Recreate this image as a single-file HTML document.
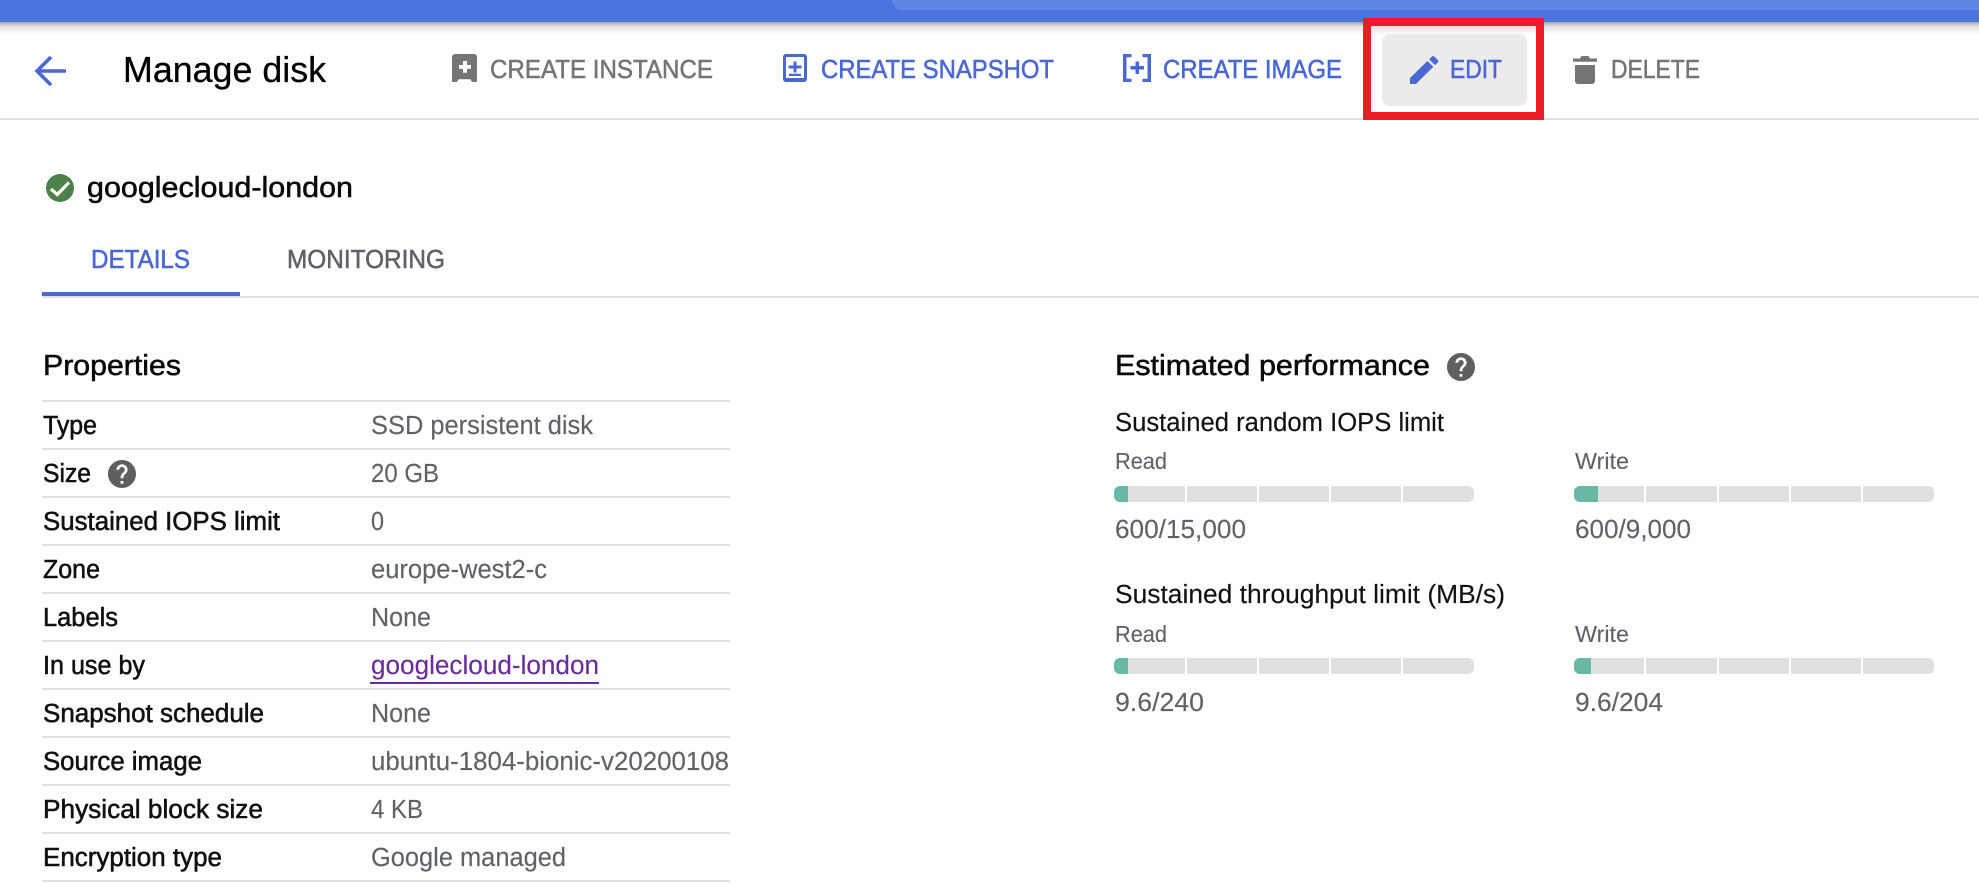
<!DOCTYPE html>
<html lang="en">
<head>
<meta charset="utf-8">
<title>Manage disk</title>
<style>
html,body{margin:0;padding:0;background:#fff;width:1979px;height:887px;overflow:hidden}
svg{display:block;position:absolute;left:0;top:0}
text{font-family:"Liberation Sans",Arial,sans-serif;white-space:pre}
.m{stroke-width:.55}
.btn{font-size:26px}
.lab{font-size:25.5px;fill:#111;stroke:#111}
.val{font-size:25.5px;fill:#5f6368;stroke:#5f6368;stroke-width:.15}
.h{font-size:29px;fill:#0a0a0a;stroke:#0a0a0a}
.sub{font-size:25.5px;fill:#111;stroke:#111;stroke-width:.15}
.sm{font-size:23px;fill:#5f6368;stroke:#5f6368;stroke-width:.12}
.num{font-size:25.5px;fill:#5f6368;stroke:#5f6368;stroke-width:.15}
</style>
</head>
<body>
<svg xmlns="http://www.w3.org/2000/svg" width="1979" height="887" viewBox="0 0 1979 887">
<defs>
<linearGradient id="sh" x1="0" y1="0" x2="0" y2="1">
<stop offset="0" stop-color="#a6a6a6"/>
<stop offset=".35" stop-color="#e2e2e2"/>
<stop offset="1" stop-color="#fff"/>
</linearGradient>
</defs>
<rect width="1979" height="887" fill="#fff"/>

<!-- top bar -->
<rect x="0" y="0" width="1979" height="22" fill="#4a74e0"/>
<path d="M892 0H1979V10H902a10 10 0 0 1-10-10z" fill="#5f86e6"/>
<rect x="0" y="22" width="1979" height="13" fill="url(#sh)"/>

<!-- toolbar -->
<rect x="0" y="118" width="1979" height="2" fill="#e0e0e0"/>
<path d="M66 71H38M51 57L37 71L51 85" fill="none" stroke="#4a67d6" stroke-width="3.600"/>
<text x="123" y="82" font-size="36" fill="#000" stroke="#000" stroke-width=".3" textLength="203" lengthAdjust="spacingAndGlyphs">Manage disk</text>

<path fill-rule="evenodd" fill="#757575" d="M456 54h18a3 3 0 0 1 3 3v24a1 1 0 0 1-1 1h-3a2 2 0 0 1-1.600-1l-1-1.700h-11.800l-1 1.700a2 2 0 0 1-1.600 1h-3a1 1 0 0 1-1-1V57a3 3 0 0 1 3-3zM463 61v4h-4v3.700h4v4h4v-4h4V65h-4v-4z"/>
<text class="btn m" x="490" y="78" fill="#757575" stroke="#757575" textLength="223" lengthAdjust="spacingAndGlyphs">CREATE INSTANCE</text>

<path fill-rule="evenodd" fill="#4a67d6" d="M786 54h18a3 3 0 0 1 3 3v22a3 3 0 0 1-3 3h-18a3 3 0 0 1-3-3V57a3 3 0 0 1 3-3zm0 3v21h18V57zM793.500 61.500h3v4h5v3h-5v4h-3v-4h-5v-3h5zM789 73.700h12v2.300h-12z"/>
<text class="btn m" x="821" y="78" fill="#4a67d6" stroke="#4a67d6" textLength="233" lengthAdjust="spacingAndGlyphs">CREATE SNAPSHOT</text>

<path fill="#4a67d6" d="M1123 54h8.500v3.200h-5v21.600h5V82h-8.500zM1142.500 54h8.500v28h-8.500v-3.200h5V57.200h-5zM1135.500 61.500h3.500v4.500h5v3.500h-5v4.500h-3.500v-4.500h-5v-3.500h5z"/>
<text class="btn m" x="1163" y="78" fill="#4a67d6" stroke="#4a67d6" textLength="179" lengthAdjust="spacingAndGlyphs">CREATE IMAGE</text>

<rect x="1382" y="34" width="145" height="72" rx="8" fill="#ebebeb"/>
<path transform="translate(1405.200 51.400) scale(1.580 1.550)" fill="#4a67d6" d="M3 17.250V21h3.750L17.810 9.940l-3.750-3.750L3 17.250zM20.710 7.040c.39-.39.39-1.020 0-1.410l-2.340-2.340c-.39-.39-1.020-.39-1.410 0l-1.830 1.830 3.750 3.750 1.830-1.830z"/>
<text class="btn m" x="1450" y="78" fill="#4a67d6" stroke="#4a67d6" textLength="52" lengthAdjust="spacingAndGlyphs">EDIT</text>
<rect x="1367" y="22" width="173" height="94" fill="none" stroke="#ed1c24" stroke-width="8"/>

<path fill="#757575" d="M1573 58.500h7l1.500-2.500h7l1.500 2.500h7v3.200h-24zM1575 65h20v16a3 3 0 0 1-3 3h-14a3 3 0 0 1-3-3z"/>
<text class="btn m" x="1611" y="78" fill="#757575" stroke="#757575" textLength="89" lengthAdjust="spacingAndGlyphs">DELETE</text>

<!-- title -->
<circle cx="60" cy="188" r="14" fill="#4a8247"/>
<path d="M51 189L57.300 194.500L69 182.500" fill="none" stroke="#fff" stroke-width="3.200"/>
<text class="m" x="87" y="197" font-size="29" fill="#0a0a0a" stroke="#0a0a0a" textLength="266" lengthAdjust="spacingAndGlyphs">googlecloud-london</text>

<!-- tabs -->
<text class="btn m" x="91" y="268" fill="#4a67d6" stroke="#4a67d6" textLength="99" lengthAdjust="spacingAndGlyphs">DETAILS</text>
<text class="btn m" x="287" y="268" fill="#5f6368" stroke="#5f6368" textLength="158" lengthAdjust="spacingAndGlyphs">MONITORING</text>
<rect x="42" y="296" width="1937" height="2" fill="#e0e0e0"/>
<rect x="42" y="292" width="198" height="4" fill="#4a67d6"/>

<!-- properties -->
<text class="h m" x="43" y="375" textLength="138" lengthAdjust="spacingAndGlyphs">Properties</text>
<g fill="#e0e0e0">
<rect x="42" y="400" width="688" height="2"/>
<rect x="42" y="448" width="688" height="2"/>
<rect x="42" y="496" width="688" height="2"/>
<rect x="42" y="544" width="688" height="2"/>
<rect x="42" y="592" width="688" height="2"/>
<rect x="42" y="640" width="688" height="2"/>
<rect x="42" y="688" width="688" height="2"/>
<rect x="42" y="736" width="688" height="2"/>
<rect x="42" y="784" width="688" height="2"/>
<rect x="42" y="832" width="688" height="2"/>
<rect x="42" y="880" width="688" height="2"/>
</g>

<text class="lab m" x="43" y="434" textLength="54" lengthAdjust="spacingAndGlyphs">Type</text>
<text class="val" x="371" y="434" textLength="222" lengthAdjust="spacingAndGlyphs">SSD persistent disk</text>

<text class="lab m" x="43" y="482" textLength="48" lengthAdjust="spacingAndGlyphs">Size</text>
<path transform="translate(105.200 457.200) scale(1.4)" fill="#5f5f5f" d="M12 2C6.480 2 2 6.480 2 12s4.480 10 10 10 10-4.480 10-10S17.520 2 12 2zm1 17h-2v-2h2v2zm2.070-7.750l-.9.920C13.450 12.900 13 13.500 13 15h-2v-.5c0-1.100.45-2.100 1.170-2.830l1.240-1.260c.37-.36.59-.86.59-1.410 0-1.100-.9-2-2-2s-2 .9-2 2H8c0-2.210 1.790-4 4-4s4 1.790 4 4c0 .88-.36 1.680-.93 2.250z"/>
<text class="val" x="371" y="482" textLength="68" lengthAdjust="spacingAndGlyphs">20 GB</text>

<text class="lab m" x="43" y="530" textLength="237" lengthAdjust="spacingAndGlyphs">Sustained IOPS limit</text>
<text class="val" x="371" y="530" textLength="13" lengthAdjust="spacingAndGlyphs">0</text>

<text class="lab m" x="43" y="578" textLength="57" lengthAdjust="spacingAndGlyphs">Zone</text>
<text class="val" x="371" y="578" textLength="176" lengthAdjust="spacingAndGlyphs">europe-west2-c</text>

<text class="lab m" x="43" y="626" textLength="75" lengthAdjust="spacingAndGlyphs">Labels</text>
<text class="val" x="371" y="626" textLength="60" lengthAdjust="spacingAndGlyphs">None</text>

<text class="lab m" x="43" y="674" textLength="102" lengthAdjust="spacingAndGlyphs">In use by</text>
<text x="371" y="674" font-size="25.500" fill="#6a2c9c" stroke="#6a2c9c" stroke-width=".15" textLength="228" lengthAdjust="spacingAndGlyphs">googlecloud-london</text>
<rect x="370" y="682" width="229" height="2" fill="#6a2c9c"/>

<text class="lab m" x="43" y="722" textLength="221" lengthAdjust="spacingAndGlyphs">Snapshot schedule</text>
<text class="val" x="371" y="722" textLength="60" lengthAdjust="spacingAndGlyphs">None</text>

<text class="lab m" x="43" y="770" textLength="159" lengthAdjust="spacingAndGlyphs">Source image</text>
<text class="val" x="371" y="770" textLength="358" lengthAdjust="spacingAndGlyphs">ubuntu-1804-bionic-v20200108</text>

<text class="lab m" x="43" y="818" textLength="220" lengthAdjust="spacingAndGlyphs">Physical block size</text>
<text class="val" x="371" y="818" textLength="52" lengthAdjust="spacingAndGlyphs">4 KB</text>

<text class="lab m" x="43" y="866" textLength="179" lengthAdjust="spacingAndGlyphs">Encryption type</text>
<text class="val" x="371" y="866" textLength="195" lengthAdjust="spacingAndGlyphs">Google managed</text>

<!-- performance -->
<text class="h m" x="1115" y="375" textLength="315" lengthAdjust="spacingAndGlyphs">Estimated performance</text>
<path transform="translate(1444.200 350.200) scale(1.4)" fill="#5f5f5f" d="M12 2C6.480 2 2 6.480 2 12s4.480 10 10 10 10-4.480 10-10S17.520 2 12 2zm1 17h-2v-2h2v2zm2.070-7.750l-.9.920C13.450 12.900 13 13.500 13 15h-2v-.5c0-1.100.45-2.100 1.170-2.830l1.240-1.260c.37-.36.59-.86.59-1.410 0-1.100-.9-2-2-2s-2 .9-2 2H8c0-2.210 1.790-4 4-4s4 1.790 4 4c0 .88-.36 1.680-.93 2.250z"/>

<text class="sub" x="1115" y="431" textLength="329" lengthAdjust="spacingAndGlyphs">Sustained random IOPS limit</text>

<text class="sm" x="1115" y="469" textLength="52" lengthAdjust="spacingAndGlyphs">Read</text>
<rect x="1114" y="486" width="360" height="16" rx="6" fill="#e0e0e0"/>
<path d="M1128 486H1120a6 6 0 0 0-6 6v4a6 6 0 0 0 6 6h8z" fill="#67b9a5"/>
<g fill="#fff"><rect x="1185" y="486" width="2" height="16"/><rect x="1257" y="486" width="2" height="16"/><rect x="1329" y="486" width="2" height="16"/><rect x="1401" y="486" width="2" height="16"/></g>
<text class="num" x="1115" y="538" textLength="131" lengthAdjust="spacingAndGlyphs">600/15,000</text>

<text class="sm" x="1575" y="469" textLength="54" lengthAdjust="spacingAndGlyphs">Write</text>
<rect x="1574" y="486" width="360" height="16" rx="6" fill="#e0e0e0"/>
<path d="M1598 486H1580a6 6 0 0 0-6 6v4a6 6 0 0 0 6 6h18z" fill="#67b9a5"/>
<g fill="#fff"><rect x="1644" y="486" width="2" height="16"/><rect x="1717" y="486" width="2" height="16"/><rect x="1789" y="486" width="2" height="16"/><rect x="1861" y="486" width="2" height="16"/></g>
<text class="num" x="1575" y="538" textLength="116" lengthAdjust="spacingAndGlyphs">600/9,000</text>

<text class="sub" x="1115" y="603" textLength="390" lengthAdjust="spacingAndGlyphs">Sustained throughput limit (MB/s)</text>

<text class="sm" x="1115" y="642" textLength="52" lengthAdjust="spacingAndGlyphs">Read</text>
<rect x="1114" y="658" width="360" height="16" rx="6" fill="#e0e0e0"/>
<path d="M1128 658H1120a6 6 0 0 0-6 6v4a6 6 0 0 0 6 6h8z" fill="#67b9a5"/>
<g fill="#fff"><rect x="1185" y="658" width="2" height="16"/><rect x="1257" y="658" width="2" height="16"/><rect x="1329" y="658" width="2" height="16"/><rect x="1401" y="658" width="2" height="16"/></g>
<text class="num" x="1115" y="711" textLength="89" lengthAdjust="spacingAndGlyphs">9.6/240</text>

<text class="sm" x="1575" y="642" textLength="54" lengthAdjust="spacingAndGlyphs">Write</text>
<rect x="1574" y="658" width="360" height="16" rx="6" fill="#e0e0e0"/>
<path d="M1591 658H1580a6 6 0 0 0-6 6v4a6 6 0 0 0 6 6h11z" fill="#67b9a5"/>
<g fill="#fff"><rect x="1644" y="658" width="2" height="16"/><rect x="1717" y="658" width="2" height="16"/><rect x="1789" y="658" width="2" height="16"/><rect x="1861" y="658" width="2" height="16"/></g>
<text class="num" x="1575" y="711" textLength="88" lengthAdjust="spacingAndGlyphs">9.6/204</text>
</svg>
</body>
</html>
